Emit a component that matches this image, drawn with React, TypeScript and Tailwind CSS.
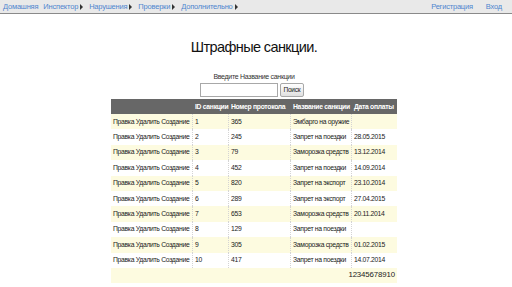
import React from "react";

const rows = [
  { id: "1", num: "365", name: "Эмбарго на оружие", date: "" },
  { id: "2", num: "245", name: "Запрет на поездки", date: "28.05.2015" },
  { id: "3", num: "79", name: "Заморозка средств", date: "13.12.2014" },
  { id: "4", num: "452", name: "Запрет на поездки", date: "14.09.2014" },
  { id: "5", num: "820", name: "Запрет на экспорт", date: "23.10.2014" },
  { id: "6", num: "289", name: "Запрет на экспорт", date: "27.04.2015" },
  { id: "7", num: "653", name: "Заморозка средств", date: "20.11.2014" },
  { id: "8", num: "129", name: "Запрет на поездки", date: "" },
  { id: "9", num: "305", name: "Заморозка средств", date: "01.02.2015" },
  { id: "10", num: "417", name: "Запрет на поездки", date: "14.07.2014" },
];

function Arrow() {
  return <span className="ml-[2px] mr-[6px] inline-block w-0 h-0 border-y-[3px] border-y-transparent border-l-[3px] border-l-[#333]" />;
}

export default function App() {
  const cell = "h-full flex items-center px-[2px] border-r border-dotted border-[#d4d4d4] last:border-r-0 whitespace-nowrap overflow-hidden";
  return (
    <div className="w-[512px] h-[287px] bg-white overflow-hidden" style={{ fontFamily: '"Liberation Sans", Arial, sans-serif' }}>
      <div className="h-[14px] bg-[#e9e9e9] border-b border-[#8a8a8a] flex items-center justify-between text-[7.5px] tracking-[-0.2px] text-[#4f86cf] pl-[3px] pr-[10px] whitespace-nowrap">
        <div className="flex items-center">
          <span className="mr-[5px]">Домашняя</span>
          <span>Инспектор</span><Arrow />
          <span>Нарушения</span><Arrow />
          <span>Проверки</span><Arrow />
          <span>Дополнительно</span><Arrow />
        </div>
        <div className="flex items-center gap-[13px]">
          <span>Регистрация</span>
          <span>Вход</span>
        </div>
      </div>

      <div className="flex flex-col items-center">
        <h1 className="mt-[24px] text-[14.5px] leading-[18px] tracking-[-0.6px] text-[#111] ml-[-4px]">Штрафные санкции.</h1>
        <div className="mt-[16px] text-[7px] leading-[9px] tracking-[-0.3px] text-[#333] ml-[-4px] whitespace-nowrap">Введите Название санкции</div>
      </div>
      <div className="mt-[2px] flex items-center gap-[2px] pl-[200px]">
        <div className="w-[78px] h-[14px] border border-[#a8a8a8] bg-white" />
        <div className="w-[24px] h-[14px] border border-[#a8a8a8] rounded-[2px] bg-gradient-to-b from-white to-[#e0e0e0] text-[6.5px] tracking-[-0.2px] text-[#222] flex items-center justify-center">Поиск</div>
      </div>

      <div className="mt-[2px] ml-[111px] w-[286px] text-[6.8px] leading-[8px] tracking-[-0.3px]">
        <div className="flex h-[15px] bg-[#676767] text-white font-bold items-center whitespace-nowrap">
          <div className="w-[82px]" />
          <div className="w-[36px] px-[2px]">ID санкции</div>
          <div className="w-[62px] px-[2px]">Номер протокола</div>
          <div className="w-[61px] px-[2px]">Название санкции</div>
          <div className="w-[45px] px-[2px]">Дата оплаты</div>
        </div>
        {rows.map((r, i) => (
          <div key={r.id} className={`flex h-[15.4px] items-center text-[#222] ${i % 2 === 0 ? "bg-[#fdfbe0]" : "bg-white"}`}>
            <div className={`w-[82px] ${cell}`}>Правка Удалить Создание</div>
            <div className={`w-[36px] ${cell}`}>{r.id}</div>
            <div className={`w-[62px] ${cell}`}>{r.num}</div>
            <div className={`w-[61px] ${cell}`}>{r.name}</div>
            <div className={`w-[45px] ${cell}`}>{r.date}</div>
          </div>
        ))}
        <div className="flex h-[15px] items-center justify-end bg-[#fdfbe0] text-[#222] pr-[2px] text-[7.8px] tracking-[-0.1px]">
          12345678910
        </div>
      </div>
    </div>
  );
}
